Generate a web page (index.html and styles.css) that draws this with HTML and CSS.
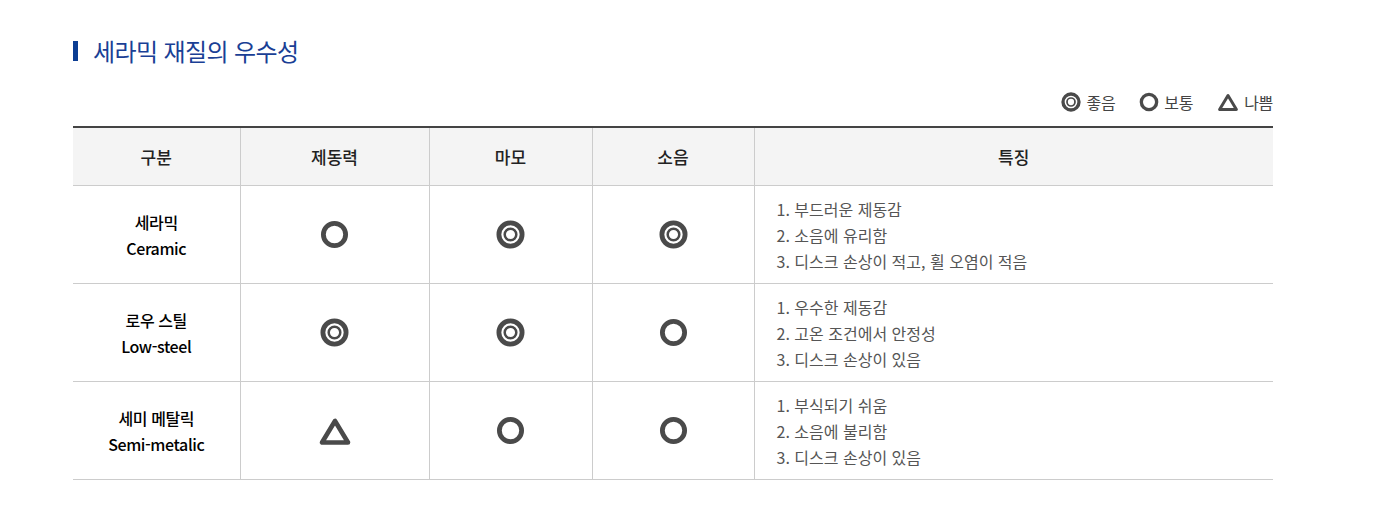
FILE: index.html
```html
<!DOCTYPE html>
<html lang="ko">
<head>
<meta charset="utf-8">
<link rel="stylesheet" href="styles.css">
</head>
<body>
<svg width="0" height="0" class="defs">
  <defs>
    <symbol id="i-double" viewBox="0 0 30 30">
      <circle cx="15" cy="15" r="12" fill="none" stroke="currentColor" stroke-width="5"/>
      <circle cx="15" cy="15" r="6" fill="none" stroke="currentColor" stroke-width="2.6"/>
    </symbol>
    <symbol id="i-circle" viewBox="0 0 30 30">
      <circle cx="15" cy="15" r="11.5" fill="none" stroke="currentColor" stroke-width="5"/>
    </symbol>
    <symbol id="i-tri" viewBox="0 0 34 30">
      <polygon points="17,5 4,26.5 30,26.5" fill="none" stroke="currentColor" stroke-width="4.6" stroke-linejoin="round"/>
    </symbol>
  </defs>
</svg>
<div class="wrap">
  <h2 class="title">세라믹 재질의 우수성</h2>
  <ul class="legend">
    <li><svg class="lg-ic"><use href="#i-double"/></svg>좋음</li>
    <li><svg class="lg-ic"><use href="#i-circle"/></svg>보통</li>
    <li><svg class="lg-ic tri"><use href="#i-tri"/></svg>나쁨</li>
  </ul>
  <table class="tbl">
    <colgroup>
      <col class="c1"><col class="c2"><col class="c3"><col class="c4"><col>
    </colgroup>
    <thead>
      <tr><th>구분</th><th>제동력</th><th>마모</th><th>소음</th><th>특징</th></tr>
    </thead>
    <tbody>
      <tr>
        <td class="name">세라믹<br>Ceramic</td>
        <td><svg class="ic"><use href="#i-circle"/></svg></td>
        <td><svg class="ic"><use href="#i-double"/></svg></td>
        <td><svg class="ic"><use href="#i-double"/></svg></td>
        <td class="desc">1. 부드러운 제동감<br>2. 소음에 유리함<br>3. 디스크 손상이 적고, 휠 오염이 적음</td>
      </tr>
      <tr>
        <td class="name">로우 스틸<br>Low-steel</td>
        <td><svg class="ic"><use href="#i-double"/></svg></td>
        <td><svg class="ic"><use href="#i-double"/></svg></td>
        <td><svg class="ic"><use href="#i-circle"/></svg></td>
        <td class="desc">1. 우수한 제동감<br>2. 고온 조건에서 안정성<br>3. 디스크 손상이 있음</td>
      </tr>
      <tr>
        <td class="name">세미 메탈릭<br>Semi-metalic</td>
        <td><svg class="ic tri"><use href="#i-tri"/></svg></td>
        <td><svg class="ic"><use href="#i-circle"/></svg></td>
        <td><svg class="ic"><use href="#i-circle"/></svg></td>
        <td class="desc">1. 부식되기 쉬움<br>2. 소음에 불리함<br>3. 디스크 손상이 있음</td>
      </tr>
    </tbody>
  </table>
</div>
</body>
</html>
```
FILE: styles.css
```css
html, body {
  margin: 0;
  padding: 0;
  background: #fff;
}
body {
  font-family: "Noto Sans CJK KR", "Noto Sans", sans-serif;
  color: #222;
}
.defs {
  position: absolute;
  width: 0;
  height: 0;
  overflow: hidden;
}
.wrap {
  width: 1200px;
  margin-left: 73px;
  padding-top: 34px;
}
.title {
  display: flex;
  align-items: center;
  gap: 15px;
  margin: 0;
  font-size: 24px;
  font-weight: 400;
  color: #1a3f95;
  line-height: 34px;
  letter-spacing: -0.6px;
}
.title::before {
  content: "";
  width: 5px;
  height: 20px;
  background: #0b3d93;
}
.legend {
  list-style: none;
  margin: 24px 0 0;
  padding: 0;
  display: flex;
  justify-content: flex-end;
  gap: 24px;
  font-size: 16px;
  color: #444;
  line-height: 20px;
  letter-spacing: -0.3px;
}
.legend li {
  display: flex;
  align-items: center;
  gap: 5px;
}
.lg-ic {
  width: 20px;
  height: 20px;
  color: #4a4a4a;
}
.lg-ic.tri {
  width: 22px;
}
.tbl {
  width: 1200px;
  margin-top: 14px;
  border-collapse: collapse;
  table-layout: fixed;
  border-top: 2px solid #444;
}
.c1 { width: 167px; }
.c2 { width: 189px; }
.c3 { width: 163px; }
.c4 { width: 162px; }
.tbl th {
  height: 57px;
  background: #f4f4f4;
  font-size: 17px;
  font-weight: 500;
  color: #222;
  border-left: 1px solid #ccc;
  border-bottom: 1px solid #ccc;
  padding: 0;
}
.tbl td {
  height: 97px;
  border-left: 1px solid #ccc;
  border-bottom: 1px solid #ccc;
  text-align: center;
  vertical-align: middle;
  padding: 0;
}
.tbl th:first-child,
.tbl td:first-child {
  border-left: 0;
}
.tbl td.name {
  font-size: 16px;
  line-height: 26px;
  color: #000;
  font-weight: 500;
  letter-spacing: -0.4px;
}
.tbl td.desc {
  text-align: left;
  padding-left: 22px;
  font-size: 16px;
  line-height: 26px;
  color: #555;
}
.ic {
  display: block;
  margin: 0 auto;
  width: 29px;
  height: 29px;
  color: #4a4a4a;
}
.ic.tri {
  width: 34px;
  height: 30px;
}
```
